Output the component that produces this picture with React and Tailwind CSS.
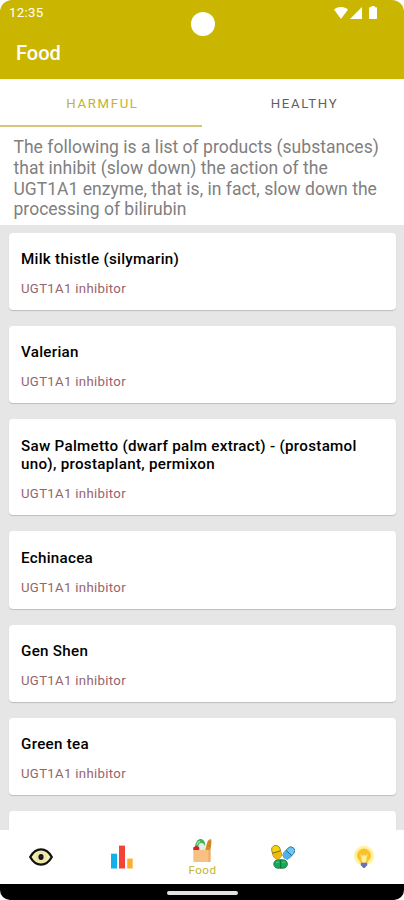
import { useState } from 'react';
import clsx from 'clsx';

const TABS = ['Harmful', 'Healthy'];

const PRODUCTS = [
  'Milk thistle (silymarin)',
  'Valerian',
  'Saw Palmetto (dwarf palm extract) - (prostamol uno), prostaplant, permixon',
  'Echinacea',
  'Gen Shen',
  'Green tea',
  '',
];

const EyeIcon = () => (
  <svg className="w-6 h-6" viewBox="0 0 24 24" fill="none">
    <path d="M1.2 12C4 7 7.600 4.400 12 4.400S20 7 22.800 12C20 17 16.400 19.600 12 19.600S4 17 1.200 12z" fill="#f6eeb0" stroke="#111" strokeWidth="2.300" strokeLinejoin="round" />
    <circle cx="12" cy="12" r="5" fill="#f2e9a9" stroke="#d9d097" strokeWidth="0.500" />
    <ellipse cx="12" cy="12" rx="2.600" ry="3" fill="#0c0f1c" />
    <circle cx="12" cy="11.800" r="0.600" fill="#54566a" />
  </svg>
);

const ChartIcon = () => (
  <svg className="w-6 h-6" viewBox="0 0 24 24">
    <rect x="1" y="8.700" width="6" height="14.800" fill="#12b0e8" />
    <rect x="9" y="0.600" width="6" height="22.900" fill="#f44336" />
    <rect x="17.200" y="13.600" width="5.500" height="9.900" fill="#fbb02d" />
  </svg>
);

const FoodIcon = () => (
  <svg className="w-6 h-6" viewBox="0 0 24 24">
    <path d="M15 12 17.500 3.400c1-1.900 3-2.800 3.800-1.800.3 3-.1 6.800-.9 10.400z" fill="#d98a2b" />
    <path d="m17.200 7 3 .8M18.500 4l2.600.8" stroke="#b06d20" strokeWidth="0.800" />
    <path d="M5 10C4.800 5 7.500 1.100 10.300 1S15 3.500 15.300 7l-.6 4z" fill="#45b05a" />
    <path d="M8.800 12c-.9-3.700-.1-6.900 2.300-7s3.600 1.800 4.400 4l-.4 3z" fill="#e4eee6" />
    <path d="M7 7c.3-2 1.400-3.300 3.200-3.600" fill="none" stroke="#b4e0bb" strokeWidth="1.100" />
    <path d="M3.300 12.500V9.800C4.300 8 7.500 7.700 9.300 9.500v3z" fill="#d71f2b" />
    <path d="M3.300 12h17.200v10.800c0 .7-.5 1.200-1.200 1.200H4.500c-.7 0-1.200-.5-1.200-1.200z" fill="#f8c083" />
    <path d="M18.300 12h2.200v10.800c0 .7-.5 1.200-1.200 1.200h-1z" fill="#f0ad69" />
  </svg>
);

const PillsIcon = () => (
  <svg className="w-6 h-6" viewBox="0 0 24 24">
    <g strokeWidth="0.900">
      <g transform="rotate(-16 5.500 7)">
        <rect x="1.300" y="0.300" width="8.400" height="13.600" rx="4.200" fill="#f5d312" stroke="#94832b" />
        <path d="M1.300 7h8.400v3a4.200 4.200 0 0 1-8.400 0z" fill="#f0b90f" />
        <path d="M1.300 7h8.400" stroke="#7c6912" />
      </g>
      <g transform="rotate(42 18 8)">
        <rect x="14" y="1.200" width="7.800" height="13.600" rx="3.900" fill="#67c8fa" stroke="#34718f" />
        <path d="M14 8h7.800v2.900a3.900 3.900 0 0 1-7.800 0z" fill="#4fb3e8" />
        <path d="M14 8h7.800" stroke="#28607d" />
      </g>
      <rect x="2.800" y="14.800" width="13.600" height="8.400" rx="4.200" fill="#12aa58" stroke="#24734a" />
      <path d="M9.600 14.800v8.400" stroke="#126537" />
      <path d="M5 17.200h3M11.300 17.200h3" stroke="#51dc8c" />
    </g>
  </svg>
);

const BulbIcon = () => (
  <svg className="w-6 h-6" viewBox="0 0 24 24">
    <circle cx="12" cy="10.800" r="10" fill="#fff29b" />
    <path d="M12 3.600a7 7 0 0 0-7 7c0 3.600 3.200 4.800 3.800 7.900h6.400c.6-3.100 3.800-4.300 3.800-7.900a7 7 0 0 0-7-7z" fill="#fbc02d" />
    <path d="m8.600 9.300 1.800 1.800 1.600-1.300 1.600 1.300 1.800-1.800-1.800 8.500h-3.200z" fill="#fff0a0" stroke="#f8df6a" strokeWidth="0.800" />
    <path d="M8.800 17.800h6.400v2.700l-1.600 1.200h-3.200l-1.600-1.200z" fill="#6673be" />
    <circle cx="12" cy="21.500" r="1.500" fill="#5c6bb8" />
  </svg>
);

const NAV = [
  { id: 'eye', Icon: EyeIcon },
  { id: 'stats', Icon: ChartIcon },
  { id: 'food', Icon: FoodIcon, label: 'Food' },
  { id: 'pills', Icon: PillsIcon },
  { id: 'tips', Icon: BulbIcon },
];

const StatusBar = () => (
  <div className="flex items-center justify-between h-[26px] pl-[9px] pr-[27px] text-white">
    <span className="text-[13.300px] tracking-[0.300px]">12:35</span>
    <div className="flex items-center -mt-px">
      <svg className="w-[14px] h-3" viewBox="0 0 15 12" preserveAspectRatio="none">
        <path d="M0 2.600C4.300-.9 10.700-.9 15 2.600L7.500 12z" fill="#fff" />
      </svg>
      <svg className="w-3 h-3 ml-0.5" viewBox="0 0 12 12">
        <path d="M12 0v12H0z" fill="#fff" />
      </svg>
      <svg className="w-2 h-[13px] ml-[7px]" viewBox="0 0 8 13">
        <path d="M2.300 0h3.400v1.300H7c.6 0 1 .4 1 1V12c0 .6-.4 1-1 1H1c-.6 0-1-.4-1-1V2.300c0-.6.4-1 1-1h1.300z" fill="#fff" />
      </svg>
    </div>
  </div>
);

const ProductCard = ({ name }) => (
  <div className="shrink-0 min-h-[77.300px] rounded-[4px] bg-white px-3 pt-[17.300px] pb-[12.100px] shadow-[0_1px_1px_rgba(0,0,0,0.18)]">
    <h2 className="text-[15.200px] leading-[18.600px] font-medium tracking-[0.280px] text-black">{name}</h2>
    {name && <p className="mt-[11.300px] text-[13.200px] leading-[18px] tracking-[0.320px] text-[#95646d]">UGT1A1 inhibitor</p>}
  </div>
);

function App() {
  const [tab, setTab] = useState('Harmful');
  const [page, setPage] = useState('food');

  return (
    <div className="flex flex-col w-[404px] h-[900px] overflow-hidden bg-white font-[Roboto,sans-serif]">
      <header className="relative shrink-0 h-[79px] rounded-t-[12px] bg-[#cab600]">
        <StatusBar />
        <div className="absolute left-[191px] top-3 size-6 rounded-full bg-white" />
        <h1 className="pl-4 pt-[13px] text-xl leading-7 font-medium text-white">Food</h1>
      </header>

      <nav className="grid grid-cols-2 shrink-0 h-12">
        {TABS.map((name) => (
          <button
            key={name}
            onClick={() => setTab(name)}
            className={clsx(
              'border-b-2 pt-[3px] pl-[3px] text-[13.200px] tracking-[1.650px] uppercase',
              tab === name ? 'border-[#d2c878] text-[#c3b22c]' : 'border-transparent text-[#5f5f5f]'
            )}
          >
            {name}
          </button>
        ))}
      </nav>

      <p className="shrink-0 h-[98px] pl-[13.500px] pr-2 pt-[10.300px] text-[17.500px] leading-[20.700px] tracking-[0.020px] text-[#808080]">
        The following is a list of products (substances) that inhibit (slow down) the action of the UGT1A1 enzyme, that is, in fact, slow down the processing of bilirubin
      </p>

      <main className="flex flex-col flex-1 min-h-0 gap-4 overflow-hidden bg-[#e6e6e6] pl-[9px] pr-2 pt-[7.900px]">
        {PRODUCTS.map((name, i) => (
          <ProductCard key={i} name={name} />
        ))}
      </main>

      <nav className="grid grid-cols-5 shrink-0 h-[54px] pl-px bg-white">
        {NAV.map(({ id, Icon, label }) => (
          <button key={id} onClick={() => setPage(id)} className="flex flex-col items-center justify-center">
            <Icon />
            {label && page === id && (
              <span className="mt-px text-[11.500px] leading-[14px] tracking-[0.500px] text-[#c3b22c]">{label}</span>
            )}
          </button>
        ))}
      </nav>

      <footer className="flex justify-center shrink-0 h-4 pt-[7px] rounded-b-[10px] bg-black">
        <div className="w-[71px] h-1 rounded-full bg-[#e2e2e2]" />
      </footer>
    </div>
  );
}

export default App;
